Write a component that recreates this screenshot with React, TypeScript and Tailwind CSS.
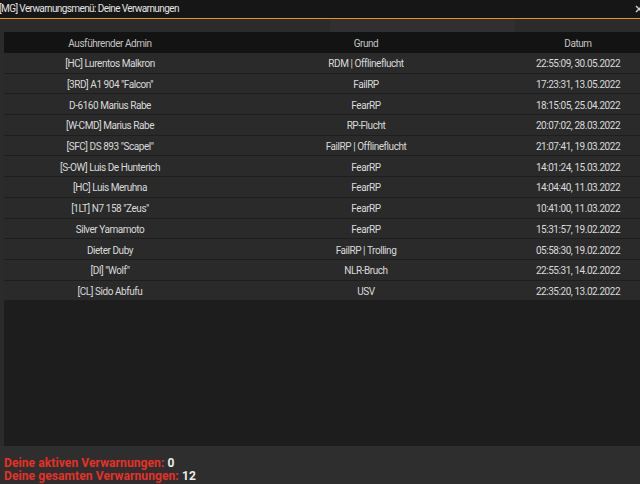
import React from 'react';

type Warning = {
  admin: string,
  reason: string,
  date: string
};

const warnings: Warning[] = [
  { admin: '[HC] Lurentos Malkron', reason: 'RDM | Offlineflucht', date: '22:55:09, 30.05.2022' },
  { admin: '[3RD] A1 904 "Falcon"', reason: 'FailRP', date: '17:23:31, 13.05.2022' },
  { admin: 'D-6160 Marius Rabe', reason: 'FearRP', date: '18:15:05, 25.04.2022' },
  { admin: '[W-CMD] Marius Rabe', reason: 'RP-Flucht', date: '20:07:02, 28.03.2022' },
  { admin: '[SFC] DS 893 "Scapel"', reason: 'FailRP | Offlineflucht', date: '21:07:41, 19.03.2022' },
  { admin: '[S-OW] Luis De Hunterich', reason: 'FearRP', date: '14:01:24, 15.03.2022' },
  { admin: '[HC] Luis Meruhna', reason: 'FearRP', date: '14:04:40, 11.03.2022' },
  { admin: '[1LT] N7 158 "Zeus"', reason: 'FearRP', date: '10:41:00, 11.03.2022' },
  { admin: 'Silver Yamamoto', reason: 'FearRP', date: '15:31:57, 19.02.2022' },
  { admin: 'Dieter Duby', reason: 'FailRP | Trolling', date: '05:58:30, 19.02.2022' },
  { admin: '[DI] "Wolf"', reason: 'NLR-Bruch', date: '22:55:31, 14.02.2022' },
  { admin: '[CL] Sido Abfufu', reason: 'USV', date: '22:35:20, 13.02.2022' },
];

const font = { fontFamily: 'Roboto, "Liberation Sans", sans-serif' };

export default function App() {
  return (
    <div className="w-[640px] h-[484px] bg-[#2b2b2b] flex flex-col overflow-hidden" style={font}>
      {/* title bar */}
      <div className="h-[18px] bg-[#161616] flex items-center justify-between border-b border-[#e8951c] box-content">
        <span className="text-[10px] text-[#e4e4e4] tracking-[-0.6px] -ml-[1px] leading-none">
          [MG] Verwarnungsmenü: Deine Verwarnungen
        </span>
        <svg width="8" height="8" viewBox="0 0 8 8" className="-mr-[3px]">
          <path d="M1 1 L7 7 M7 1 L1 7" stroke="#d0d0d0" strokeWidth="1.4" />
        </svg>
      </div>

      <div className="h-[13px] flex">
        <div className="w-[330px]" />
        <div className="w-[185px] bg-[#303030]" />
      </div>

      {/* list */}
      <div className="ml-[4px] h-[414px] bg-[#1d1d1d] flex flex-col text-[10px] tracking-[-0.45px]">
        <div className="h-[21px] pt-[2px] bg-[#131313] flex items-center text-[#c4c4c4]">
          <div className="w-[212px] text-center">Ausführender Admin</div>
          <div className="w-[300px] text-center">Grund</div>
          <div className="w-[124px] text-center">Datum</div>
        </div>
        {warnings.map((w, i) => (
          <div key={i} className="h-[20.7px] pt-[2px] bg-[#2a2a2a] border-b border-[#1e1e1e] flex items-center text-[#dadada]">
            <div className="w-[212px] text-center">{w.admin}</div>
            <div className="w-[300px] text-center">{w.reason}</div>
            <div className="w-[124px] text-center">{w.date}</div>
          </div>
        ))}
      </div>

      {/* summary */}
      <div className="flex-1 bg-[#2e2e2e] flex flex-col justify-end pb-[1px] pl-[4px] text-[12px] font-bold leading-[13px] tracking-[0.1px] text-[#ea2f26]">
        <div>Deine aktiven Verwarnungen: <span className="text-[#ececec]">0</span></div>
        <div>Deine gesamten Verwarnungen: <span className="text-[#ececec]">12</span></div>
      </div>
    </div>
  );
}
